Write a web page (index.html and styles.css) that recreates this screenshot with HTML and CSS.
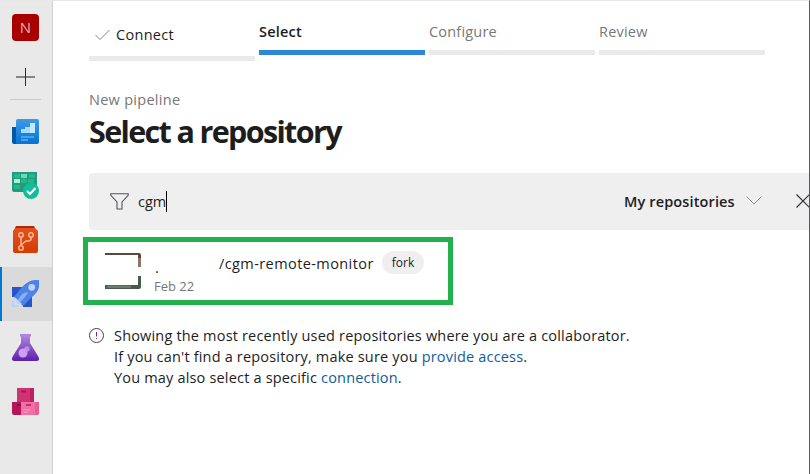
FILE: index.html
```html
<!DOCTYPE html>
<html lang="en">
<head>
<meta charset="utf-8">
<title>New pipeline</title>
<link rel="stylesheet" href="styles.css">
</head>
<body>
<div class="app">
  <nav class="rail">
    <div class="project">N</div>
    <svg class="plus" width="19" height="19" viewBox="0 0 19 19"><path d="M0 9h19" stroke="#858585" stroke-width="2"/><path d="M9.500 0v18" stroke="#35204f"/></svg>
    <div class="rule"></div>
    <a class="item"><svg width="27" height="27" viewBox="0 0 27 27">
      <defs><linearGradient id="b" x2="0" y2="1"><stop stop-color="#3d9be6"/><stop offset="1" stop-color="#0873d2"/></linearGradient></defs>
      <path d="M0 9h5v17H2q-2 0-2-2z" fill="#0058a8"/><path d="M6 1h19q2 0 2 2v21q0 2-2 2H4V3q0-2 2-2z" fill="url(#b)"/>
      <path d="M9 11h4V9h5V5h5v10H9z" fill="#a9d9fb"/><path d="M18 5h5v10h-5z" fill="#c7e7ff"/><path d="M9 18h13v2H9zM9 21h7v2H9z" fill="#44a3ed"/></svg></a>
    <a class="item"><svg width="27" height="27" viewBox="0 0 27 27">
      <path d="M0 0h25v20H2q-2 0-2-2z" fill="#249b7d"/><path d="M2 2h6v4H2zM17 2h6v4h-6zM2 13h6v4H2zM9 7h6v4H9zM16 7h6v4h-6z" fill="#27b78f"/><path d="M9 2h6v4H9z" fill="#66ddb6"/><path d="M2 7h6v4H2z" fill="#a5f5d5"/>
      <circle cx="19" cy="19" r="8" fill="#13bd9b"/><path d="m15 19 3 3 5.500-6" fill="none" stroke="#fff" stroke-width="2.200"/></svg></a>
    <a class="item"><svg width="27" height="27" viewBox="0 0 27 27">
      <defs><linearGradient id="r" x2="0" y2="1"><stop stop-color="#e0521f"/><stop offset="1" stop-color="#d63b02"/></linearGradient></defs>
      <path d="M4 0h18l1 2H3z" fill="#a92c08"/><path d="M3 2h20l3 3v20q0 2-2 2H3q-2 0-2-2V5z" fill="url(#r)"/>
      <g fill="none" stroke="#ffb895" stroke-width="1.500"><circle cx="9" cy="9" r="2.200"/><circle cx="19" cy="9" r="2.200"/><circle cx="9" cy="22" r="2.200"/><path d="M9 11.500v8M19 11v2q0 2-3 2h-2l-5 4"/></g></svg></a>
    <a class="item active"><svg width="27" height="27" viewBox="0 0 27 27">
      <path d="M0 7h12L6 17H0zM20 14v13h-9v-9z" fill="#2555c9"/><path d="M27 0v7q-1 5-7 10l-9 9-9-9 8-10Q17 0 23 0z" fill="#4e82e8"/>
      <path d="M6 20Q10 12 16 12 14 17 8 22z" fill="#86b0f8"/><circle cx="19.700" cy="7.300" r="3.400" fill="#b9d4ff"/><path d="M0 20h2v5h5v2H0zM3 17l7 7-5 0z" fill="#b8d3ff"/></svg></a>
    <a class="item"><svg width="27" height="27" viewBox="0 0 27 27">
      <defs><linearGradient id="p" x2="0" y2="1"><stop stop-color="#ad83df"/><stop offset="1" stop-color="#5d1fa9"/></linearGradient></defs>
      <path d="M9 2h9v7l8 13q3 5-2 5H3q-5 0-2-5L9 9z" fill="url(#p)"/><path d="M8 0h11v2.500H8z" fill="#ad83e4"/><circle cx="11" cy="19" r="4.500" fill="#cf9ff5"/><circle cx="15" cy="15" r="2.700" fill="#c69bf0" fill-opacity=".8"/></svg></a>
    <a class="item"><svg width="27" height="27" viewBox="0 0 27 27">
      <path d="M5 0h17v14H5z" fill="#cf3372"/><path d="M18 0h4v14h-4z" fill="#bd225f"/><path d="M0 14h9v13H2q-2 0-2-2z" fill="#b4185a"/><path d="M9 14h18v11q0 2-2 2H9z" fill="#f06fa4"/><path d="M23 14h4v11q0 2-2 2h-2z" fill="#e55e96"/>
      <path d="M9 2.500h5v2H9z" fill="#a91950"/><path d="M5 16h4v2H5z" fill="#870e40"/><path d="M14 16h5v2h-5z" fill="#c42e6c"/><path d="M11 21h7v1.500h-7zM11 23.500h5V25h-5z" fill="#f88ab8"/></svg></a>
  </nav>
  <main class="main">
    <ol class="steps">
      <li class="step done"><span class="label"><svg width="15" height="12" viewBox="0 0 15 12"><path d="m.5 6 4.500 4.500L14.500 1" fill="none" stroke="#7c8491"/></svg><span>Connect</span></span></li>
      <li class="step current"><span class="label">Select</span></li>
      <li class="step"><span class="label">Configure</span></li>
      <li class="step"><span class="label">Review</span></li>
    </ol>
    <p class="crumb">New pipeline</p>
    <h1>Select a repository</h1>
    <div class="filter">
      <svg class="funnel" width="19" height="17" viewBox="0 0 19 17"><path d="M.8.700h17.400v1.600L12 9v7H7V9L.8 2.300z" fill="none" stroke="#50545a" stroke-width="1.100"/></svg>
      <span class="query">cgm</span><span class="caret"></span>
      <span class="scope">My repositories</span>
      <svg class="chev" width="16" height="9" viewBox="0 0 16 9"><path d="m.5.500 7.500 7.500L15.500.500" fill="none" stroke="#94908a"/></svg>
      <svg class="close" width="13" height="14" viewBox="0 0 13 14"><path d="m.5.500 13 13M.5 13.500l13-13" stroke="#333" stroke-width="1.200"/></svg>
    </div>
    <section class="result">
      <svg class="avatar" width="36" height="37" viewBox="0 0 36 37"><path d="M0 0h34q2 0 2 2v12h-3V2H0z" fill="#5d493c"/><path d="M33 5h3v9h-3z" fill="#8d7560"/><path d="M33 23h3v11q0 2-2 2H0v-4h33z" fill="#465b4b"/><path d="M2 32.500h24v2.500H2z" fill="#697e66"/></svg>
      <div class="info">
        <div class="name"><span class="owner">.</span><span class="repo">/cgm-remote-monitor</span><span class="badge">fork</span></div>
        <div class="date">Feb 22</div>
      </div>
    </section>
    <section class="note">
      <svg width="15" height="15" viewBox="0 0 15 15"><circle cx="7.500" cy="7.500" r="7" fill="none" stroke="#454545"/><path d="M7.500 4v4.500M7.500 10v1" stroke="#762080"/></svg>
      <div class="lines">
        <div>Showing the most recently used repositories where you are a collaborator.</div>
        <div>If you can't find a repository, make sure you <a>provide access</a>.</div>
        <div>You may also select a specific <a>connection</a>.</div>
      </div>
    </section>
  </main>
</div>
</body>
</html>
```
FILE: styles.css
```css
* { box-sizing: border-box; }
body { margin: 0; width: 810px; height: 474px; overflow: hidden; background: #fff; color: #1d1d1d; font: 14.5px/21px "Open Sans", "Noto Sans", sans-serif; }
.app { display: flex; height: 474px; border-top: 1px solid #e7e7e7; border-right: 1px solid #59595c; overflow: hidden; }
.rail { width: 53px; flex: none; background: #e9e9e9; border-right: 1px solid #cfcfcf; display: flex; flex-direction: column; align-items: center; padding-top: 13px; }
.project { width: 27px; height: 27px; margin-right: 1px; border-radius: 4px; background: #a80000; color: #e5b1b1; font-size: 15px; line-height: 27px; text-align: center; }
.plus { margin: 27px 1px 0 0; flex: none; }
.rule { width: 31px; height: 1px; margin: 12px 1px 5px 0; background: #c9c9c9; flex: none; }
.item { width: 52px; height: 54px; flex: none; display: flex; align-items: flex-start; padding: 13px 0 0 12px; }
.item.active { background: #dadada; box-shadow: inset 2px 0 #0078d4; }
.main { flex: 1; min-width: 0; padding-left: 36px; }
.steps { list-style: none; display: flex; gap: 4px; align-items: flex-start; margin: 0; padding: 20px 0 0; height: 60px; }
.step { width: 166px; flex: none; border-bottom: 5px solid #eaeaea; height: 34px; color: #777; letter-spacing: .2px; }
.step.done { height: 40px; color: #1d1d1d; letter-spacing: .3px; }
.step.done .label { display: flex; align-items: center; gap: 6px; padding: 3px 0 0 6px; }
.step.current { border-color: #2b88d8; color: #1d1d1d; font-weight: 600; }
.label { display: block; white-space: nowrap; }
.crumb { margin: 28px 0 0; color: #777; letter-spacing: .28px; }
h1 { margin: 3px 0 0; font-size: 30.5px; line-height: 36px; font-weight: 700; letter-spacing: -1.65px; white-space: nowrap; }
.filter { display: flex; align-items: center; margin-top: 24px; height: 57px; background: #efefef; border-radius: 4px 0 0 4px; padding-left: 21px; white-space: nowrap; }
.query { margin-left: 9px; width: 28px; line-height: 20px; }
.caret { width: 1px; height: 21px; background: #000; }
.scope { margin-left: auto; width: 111px; font-weight: 600; letter-spacing: .13px; }
.chev { margin: -3px 34px 0 11px; flex: none; }
.close { flex: none; margin-top: -2px; }
.result { display: flex; width: 370px; height: 68px; margin: 7px 0 0 -6px; border: 5px solid #22b14c; padding: 11px 0 0 17px; }
.avatar { flex: none; margin-right: 14px; }
.info { white-space: nowrap; }
.name { display: flex; height: 23px; }
.owner { width: 64px; padding-top: 4px; }
.repo { width: 155px; letter-spacing: .41px; }
.badge { height: 23px; width: 42px; margin: -2px 0 0 8px; border-radius: 12px; background: #efefef; font-size: 12px; line-height: 23px; text-align: center; }
.date { color: #777; font-size: 13px; margin-left: -1px; }
.note { display: flex; margin-top: 20px; white-space: nowrap; }
.note > svg { margin: 3px 10px 0 0; flex: none; }
.lines { letter-spacing: .18px; }
.note a { color: #105c9c; }
```
